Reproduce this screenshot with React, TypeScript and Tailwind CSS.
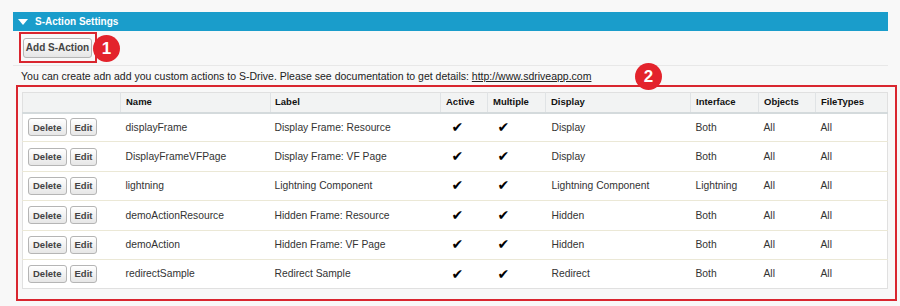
import React from "react";

interface ActionRow {
  name: string;
  label: string;
  display: string;
  iface: string;
}

const rows: ActionRow[] = [
  { name: "displayFrame", label: "Display Frame: Resource", display: "Display", iface: "Both" },
  { name: "DisplayFrameVFPage", label: "Display Frame: VF Page", display: "Display", iface: "Both" },
  { name: "lightning", label: "Lightning Component", display: "Lightning Component", iface: "Lightning" },
  { name: "demoActionResource", label: "Hidden Frame: Resource", display: "Hidden", iface: "Both" },
  { name: "demoAction", label: "Hidden Frame: VF Page", display: "Hidden", iface: "Both" },
  { name: "redirectSample", label: "Redirect Sample", display: "Redirect", iface: "Both" },
];

const SmallButton = ({ children }: { children: React.ReactNode }) => (
  <button
    type="button"
    className="h-[18px] px-[4px] rounded-[3px] border border-[#b5b5b5] bg-gradient-to-b from-white to-[#e6e6e6] text-[9.5px] font-bold text-[#444] leading-none"
  >
    {children}
  </button>
);

const Badge = ({ n }: { n: number }) => (
  <div className="w-[27px] h-[27px] rounded-full bg-[#e3232c] text-white font-bold text-[17px] flex items-center justify-center leading-none">
    {n}
  </div>
);

const Check = () => (
  <span className="text-[14px] text-black" style={{ fontFamily: "'DejaVu Sans', sans-serif" }}>
    ✔
  </span>
);

const App = () => {
  return (
    <div className="w-[900px] h-[306px] bg-[#f8f8f8] pt-[12px] font-['Liberation_Sans',Arial,sans-serif] text-[#333]">
      {/* section header */}
      <div className="ml-[13px] w-[875px] h-[19px] bg-[#1a9dcb] flex items-center">
        <span className="ml-[5px] w-0 h-0 border-l-[5px] border-r-[5px] border-t-[6px] border-l-transparent border-r-transparent border-t-white" />
        <span className="ml-[7px] text-[10px] font-bold text-white">S-Action Settings</span>
      </div>

      {/* add button */}
      <div className="relative ml-[19px] mt-[1px] w-[78px] h-[31px] border-2 border-[#d9262f] flex items-center pl-[2px]">
        <button
          type="button"
          className="h-[20px] w-[69px] rounded-[3px] border border-[#b5b5b5] bg-gradient-to-b from-white to-[#e6e6e6] text-[10px] font-bold text-[#444]"
        >
          Add S-Action
        </button>
        <div className="absolute left-[72px] top-[1px]">
          <Badge n={1} />
        </div>
      </div>

      <div className="ml-[13px] w-[875px] mt-[2px] border-t border-[#e8e8e8]" />

      <p className="ml-[21px] mt-[4px] text-[10.5px] leading-[13px] text-[#222]">
        You can create adn add you custom actions to S-Drive. Please see documentation to get details:{" "}
        <span className="underline">http://www.sdriveapp.com</span>
      </p>

      {/* table box */}
      <div className="relative ml-[16px] mt-[2px] w-[881px] h-[216px] border-2 border-[#d9262f] pt-[5px] pl-[4px]">
        <div className="absolute left-[617px] top-[-24px]">
          <Badge n={2} />
        </div>
        <table className="table-fixed border-collapse w-[865px] bg-white border border-[#e0e0e0] text-[10.3px] text-[#333]">
          <colgroup>
            <col className="w-[98px]" />
            <col className="w-[150px]" />
            <col className="w-[170px]" />
            <col className="w-[47px]" />
            <col className="w-[58px]" />
            <col className="w-[145px]" />
            <col className="w-[68px]" />
            <col className="w-[57px]" />
            <col className="w-[72px]" />
          </colgroup>
          <thead>
            <tr className="h-[20px] bg-[#f2f3f3] border-b-2 border-[#d4dadc] text-[9.5px] font-bold text-[#111] text-left">
              <th className="px-[5px]" />
              <th className="px-[5px] border-l border-[#e0e3e5]">Name</th>
              <th className="px-[4px] border-l border-[#e0e3e5]">Label</th>
              <th className="px-[5px] border-l border-[#e0e3e5]">Active</th>
              <th className="px-[5px] border-l border-[#e0e3e5]">Multiple</th>
              <th className="px-[5px] border-l border-[#e0e3e5]">Display</th>
              <th className="px-[5px] border-l border-[#e0e3e5]">Interface</th>
              <th className="px-[5px] border-l border-[#e0e3e5]">Objects</th>
              <th className="px-[5px] border-l border-[#e0e3e5]">FileTypes</th>
            </tr>
          </thead>
          <tbody>
            {rows.map((r, i) => (
              <tr
                key={r.name}
                className={`h-[29.4px] ${i < rows.length - 1 ? "border-b border-[#ebe8d6]" : ""}`}
              >
                <td className="pl-[5px]">
                  <div className="flex gap-[3px]">
                    <SmallButton>Delete</SmallButton>
                    <SmallButton>Edit</SmallButton>
                  </div>
                </td>
                <td className="px-[5px]">{r.name}</td>
                <td className="px-[4px]">{r.label}</td>
                <td className="pl-[11px]">
                  <Check />
                </td>
                <td className="pl-[10px]">
                  <Check />
                </td>
                <td className="px-[6px]">{r.display}</td>
                <td className="px-[5px]">{r.iface}</td>
                <td className="px-[5px]">All</td>
                <td className="px-[5px]">All</td>
              </tr>
            ))}
          </tbody>
        </table>
      </div>
    </div>
  );
};

export default App;
